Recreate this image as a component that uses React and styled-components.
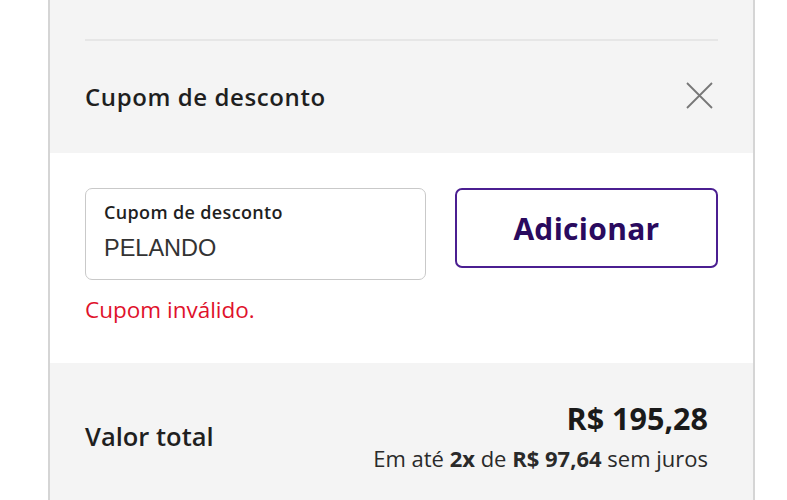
import React from "react";
import styled, { createGlobalStyle } from "styled-components";

const Global = createGlobalStyle`
  html, body { margin: 0; padding: 0; background: #ffffff; }
  body { font-family: "Open Sans", "Noto Sans", sans-serif; color: #1f1f1f; }
  * { box-sizing: border-box; }
`;

const Page = styled.div`
  display: flex;
  padding-left: 48px;
  height: 500px;
  overflow: hidden;
`;

const Panel = styled.div`
  width: 707px;
  border-left: 2px solid #d5d5d5;
  border-right: 2px solid #d5d5d5;
  display: flex;
  flex-direction: column;
`;

const Section = styled.section`
  background: ${(p) => (p.$tone === "white" ? "#ffffff" : "#f4f4f4")};
  padding: ${(p) => p.$pad};
  height: ${(p) => p.$h};
  flex: none;
`;

const Divider = styled.hr`
  margin: 0;
  border: none;
  height: 2px;
  background: #e6e6e6;
`;

const HeaderRow = styled.div`
  display: flex;
  align-items: center;
  justify-content: space-between;
  height: 112px;
`;

const Title = styled.h2`
  margin: 0;
  font-size: 24px;
  line-height: 32px;
  letter-spacing: 0.6px;
  font-weight: 600;
  color: #1f1f1f;
`;

const CloseButton = styled.button`
  border: none;
  background: none;
  padding: 0;
  width: 28px;
  height: 28px;
  display: flex;
  align-items: center;
  justify-content: center;
  margin: 0 5px 4px 0;
  cursor: pointer;
`;

const FormRow = styled.div`
  display: flex;
  gap: 29px;
  align-items: flex-start;
`;

const Field = styled.label`
  width: 342px;
  height: 92px;
  border: 1.5px solid #c9c9c9;
  border-radius: 7px;
  padding: 11px 18px 0;
  display: flex;
  flex-direction: column;
  background: #fff;
`;

const FieldLabel = styled.span`
  font-size: 18px;
  font-weight: 600;
  letter-spacing: 0.35px;
  color: #1f1f1f;
  line-height: 24px;
`;

const FieldInput = styled.input`
  border: none;
  outline: none;
  padding: 0;
  margin-top: 10px;
  height: 28px;
  font-family: "Liberation Sans", Arial, sans-serif;
  font-size: 23.5px;
  color: #333;
  background: transparent;
  width: 100%;
`;

const AddButton = styled.button`
  width: 264px;
  height: 80px;
  border: 2px solid #4b1f91;
  border-radius: 7px;
  background: #fff;
  color: #2a0a5e;
  font-family: "Open Sans", sans-serif;
  font-size: 30px;
  letter-spacing: 0.3px;
  font-weight: 700;
  cursor: pointer;
`;

const ErrorText = styled.p`
  margin: 16px 0 0;
  color: #e0112b;
  font-size: 22.5px;
  line-height: 28px;
`;

const TotalRow = styled.div`
  display: flex;
  justify-content: space-between;
  align-items: center;
`;

const TotalLabel = styled.span`
  font-size: 25.5px;
  font-weight: 600;
  line-height: 32px;
  color: #1f1f1f;
`;

const PriceBlock = styled.div`
  display: flex;
  flex-direction: column;
  align-items: flex-end;
  margin-right: 10px;
`;

const Price = styled.span`
  font-size: 30.5px;
  font-weight: 700;
  line-height: 40px;
  color: #1a1a1a;
`;

const Installments = styled.span`
  font-size: 22px;
  line-height: 30px;
  margin-top: 5px;
  color: #2a2a2a;
  b { font-weight: 700; }
`;

export default function App() {
  return (
    <>
      <Global />
      <Page>
        <Panel>
          <Section $tone="gray" $pad="39px 35px 0" $h="153px">
            <Divider />
            <HeaderRow>
              <Title>Cupom de desconto</Title>
              <CloseButton aria-label="Fechar">
                <svg width="27" height="27" viewBox="0 0 27 27" fill="none" stroke="#777" strokeWidth="1.8">
                  <path d="M1 1 L26 26 M26 1 L1 26" />
                </svg>
              </CloseButton>
            </HeaderRow>
          </Section>
          <Section $tone="white" $pad="35px 35px 0" $h="210px">
            <FormRow>
              <Field>
                <FieldLabel>Cupom de desconto</FieldLabel>
                <FieldInput defaultValue="PELANDO" />
              </Field>
              <AddButton>Adicionar</AddButton>
            </FormRow>
            <ErrorText>Cupom inválido.</ErrorText>
          </Section>
          <Section $tone="gray" $pad="35px 35px 0" $h="137px">
            <TotalRow>
              <TotalLabel>Valor total</TotalLabel>
              <PriceBlock>
                <Price>R$ 195,28</Price>
                <Installments>
                  Em até <b>2x</b> de <b>R$ 97,64</b> sem juros
                </Installments>
              </PriceBlock>
            </TotalRow>
          </Section>
        </Panel>
      </Page>
    </>
  );
}
